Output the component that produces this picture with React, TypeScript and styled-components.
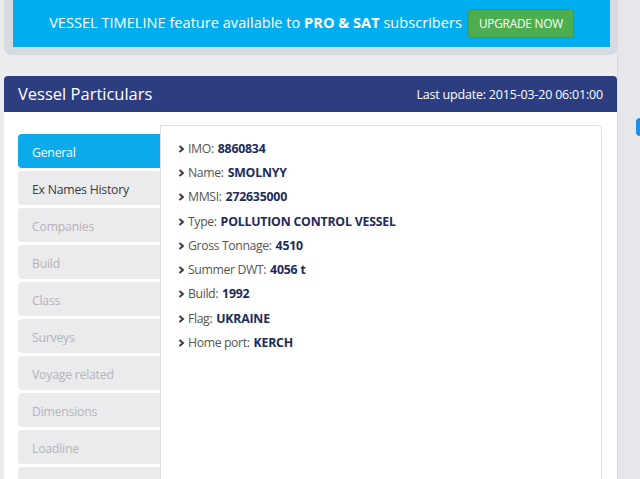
import { createGlobalStyle, styled } from "styled-components"

const GlobalStyle = createGlobalStyle`
    html, body {
        margin: 0;
        padding: 0;
        background: #ececee;
        overflow: hidden;
    }
    body {
        font-family: "Open Sans", "Liberation Sans", sans-serif;
    }
`
const Page = styled.div`
    display: flex;
    width: 640px;
    height: 479px;
    overflow: hidden;
`
const Main = styled.div`
    width: 613px;
    padding-left: 4px;
`
const SideStrip = styled.div`
    position: relative;
    flex: 1;
    background: #e6e7ea;
    border-left: 1px solid #d9dade;
`
const SideKnob = styled.div`
    position: absolute;
    left: 18px;
    top: 118px;
    width: 12px;
    height: 18px;
    border-radius: 4px;
    background: #1f8ce6;
`
const TopBox = styled.div`
    background: #d7dae0;
    padding: 0 7px 8px 9px;
    border-radius: 0 0 7px 7px;
`
const Banner = styled.div`
    height: 47px;
    background: #00adef;
    display: flex;
    align-items: center;
    justify-content: center;
    gap: 6px;
    color: #ffffff;
    font-size: 14.6px;
    box-sizing: border-box;
`
const BannerText = styled.span`
    margin-top: -4px;
    b {
        font-weight: 700;
    }
`
const UpgradeButton = styled.button`
    height: 29px;
    margin-top: -1px;
    padding: 0 10px;
    background: #4dae4f;
    border: 1px solid #3f9a43;
    border-radius: 3px;
    color: #ffffff;
    font-family: "Open Sans", "Liberation Sans", sans-serif;
    font-size: 11.8px;
    letter-spacing: -0.2px;
`
const Card = styled.div`
    margin-top: 21px;
    background: #ffffff;
    border-radius: 4px 4px 0 0;
    height: 410px;
`
const CardHeader = styled.div`
    height: 36px;
    background: #2d3e80;
    border-radius: 4px 4px 0 0;
    display: flex;
    align-items: center;
    justify-content: space-between;
    padding: 0 14px;
    color: #ffffff;
`
const CardTitle = styled.h2`
    margin: 0 0 2px;
    font-size: 16.5px;
    font-weight: 400;
`
const LastUpdate = styled.span`
    font-size: 12.5px;
    letter-spacing: -0.2px;
`
const CardBody = styled.div`
    display: flex;
    padding-top: 13px;
`
const TabList = styled.div`
    width: 142px;
    padding-left: 14px;
    padding-top: 9px;
    display: flex;
    flex-direction: column;
    gap: 3px;
`
const Tab = styled.div<{ $active?: boolean; $disabled?: boolean }>`
    height: 34px;
    display: flex;
    align-items: center;
    padding: 2px 0 0 14px;
    box-sizing: border-box;
    border-radius: 4px 0 0 4px;
    font-size: 12.3px;
    letter-spacing: -0.25px;
    background: ${p => (p.$active ? "#0aaaec" : "#ebebee")};
    color: ${p => (p.$active ? "#ffffff" : p.$disabled ? "#b4b4b8" : "#3a3a3a")};
`
const InfoPanel = styled.div`
    width: 442px;
    height: 400px;
    border: 1px solid #dedede;
    border-radius: 0 5px 0 0;
    padding: 10px 17px;
    box-sizing: border-box;
`
const InfoRow = styled.div`
    display: flex;
    align-items: center;
    height: 24.3px;
    font-size: 12.3px;
    letter-spacing: -0.4px;
    color: #555555;
`
const Chevron = styled.svg`
    width: 7px;
    height: 8px;
    margin-right: 3px;
    margin-top: 1px;
`
const Value = styled.b`
    margin-left: 4px;
    color: #1c2b5a;
    font-weight: 700;
    letter-spacing: -0.2px;
`

const tabs = [
    { name: "General", active: true },
    { name: "Ex Names History" },
    { name: "Companies", disabled: true },
    { name: "Build", disabled: true },
    { name: "Class", disabled: true },
    { name: "Surveys", disabled: true },
    { name: "Voyage related", disabled: true },
    { name: "Dimensions", disabled: true },
    { name: "Loadline", disabled: true },
    { name: "", disabled: true },
]

const particulars = [
    ["IMO", "8860834"],
    ["Name", "SMOLNYY"],
    ["MMSI", "272635000"],
    ["Type", "POLLUTION CONTROL VESSEL"],
    ["Gross Tonnage", "4510"],
    ["Summer DWT", "4056 t"],
    ["Build", "1992"],
    ["Flag", "UKRAINE"],
    ["Home port", "KERCH"],
]

export default function App() {
    return (
        <Page>
            <GlobalStyle />
            <Main>
                <TopBox>
                    <Banner>
                        <BannerText>
                            VESSEL TIMELINE feature available to <b>PRO &amp; SAT</b> subscribers
                        </BannerText>
                        <UpgradeButton>UPGRADE NOW</UpgradeButton>
                    </Banner>
                </TopBox>
                <Card>
                    <CardHeader>
                        <CardTitle>Vessel Particulars</CardTitle>
                        <LastUpdate>Last update: 2015-03-20 06:01:00</LastUpdate>
                    </CardHeader>
                    <CardBody>
                        <TabList>
                            {tabs.map((t, i) => (
                                <Tab key={i} $active={t.active} $disabled={t.disabled}>
                                    {t.name}
                                </Tab>
                            ))}
                        </TabList>
                        <InfoPanel>
                            {particulars.map(([label, value]) => (
                                <InfoRow key={label}>
                                    <Chevron viewBox="0 0 7 8">
                                        <polyline points="1.5,1 5,4 1.5,7" fill="none" stroke="#333" strokeWidth="1.8" />
                                    </Chevron>
                                    {label}:<Value>{value}</Value>
                                </InfoRow>
                            ))}
                        </InfoPanel>
                    </CardBody>
                </Card>
            </Main>
            <SideStrip>
                <SideKnob />
            </SideStrip>
        </Page>
    )
}
